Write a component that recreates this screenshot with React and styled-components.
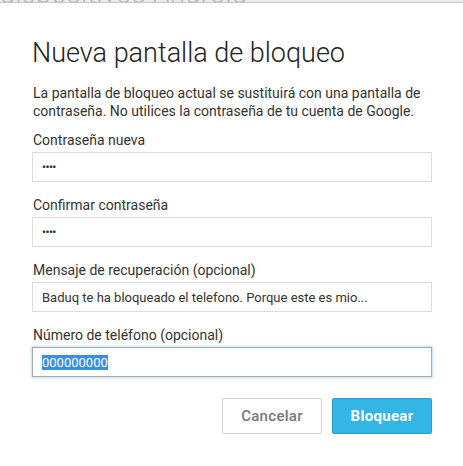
import React from 'react';
import styled, { createGlobalStyle } from 'styled-components';

const GlobalStyle = createGlobalStyle`
    body {
        margin: 0;
        background: #ffffff;
        font-family: Roboto, "Noto Sans", Arial, sans-serif;
    }
`

const fields = [
    { label: 'Contraseña nueva', value: '••••', secret: true },
    { label: 'Confirmar contraseña', value: '••••', secret: true },
    { label: 'Mensaje de recuperación (opcional)', value: 'Baduq te ha bloqueado el telefono. Porque este es mio...' },
    { label: 'Número de teléfono (opcional)', value: '000000000', focused: true },
]

export default function App() {
    return (
        <>
            <GlobalStyle />
            <Backdrop>
                <BackdropText>dispositivos Android</BackdropText>
            </Backdrop>
            <Dialog>
                <Title>Nueva pantalla de bloqueo</Title>
                <Description>
                    La pantalla de bloqueo actual se sustituirá con una pantalla de contraseña. No utilices la contraseña de tu cuenta de Google.
                </Description>
                <Form>
                    {fields.map(f => (
                        <Field key={f.label}>
                            <Label>{f.label}</Label>
                            <InputBox $focused={f.focused}>
                                {f.secret && <Dots>{f.value}</Dots>}
                                {!f.secret && f.focused && <Selected>{f.value}</Selected>}
                                {!f.secret && !f.focused && f.value}
                            </InputBox>
                        </Field>
                    ))}
                </Form>
                <Actions>
                    <Button>Cancelar</Button>
                    <Button $primary>Bloquear</Button>
                </Actions>
            </Dialog>
        </>
    )
}

const Backdrop = styled.div`
    height: 2px;
    overflow: hidden;
    display: flex;
    align-items: flex-end;
    background: #ececec;
    border-bottom: 1px solid #c9c9c9;
`

const BackdropText = styled.span`
    font-size: 27px;
    line-height: 27px;
    margin-bottom: -6px;
    color: #b9b9b9;
    font-weight: 300;
    letter-spacing: 0.4px;
    white-space: nowrap;
`

const Dialog = styled.div`
    width: 400px;
    padding: 35px 0 0 32px;
    display: flex;
    flex-direction: column;
`

const Title = styled.h1`
    margin: 0;
    font-size: 27px;
    line-height: 31px;
    font-weight: 300;
    color: #222;
`

const Description = styled.p`
    margin: 15px 0 0 1px;
    font-size: 14px;
    line-height: 18px;
    color: #333;
`

const Form = styled.div`
    margin-top: 11px;
    display: flex;
    flex-direction: column;
    gap: 14px;
`

const Field = styled.div`
    display: flex;
    flex-direction: column;
`

const Label = styled.label`
    font-size: 14px;
    line-height: 18px;
    color: #333;
    margin: 0 0 3px 1px;
`

const InputBox = styled.div`
    box-sizing: border-box;
    height: 30px;
    display: flex;
    align-items: center;
    padding: 0 9px;
    font-size: 13px;
    color: #333;
    border: 1px solid ${p => p.$focused ? '#a9a9a9' : '#dcdcdc'};
    box-shadow: ${p => p.$focused ? '0 0 2px 1px #bfe0f4' : 'none'};
`

const Dots = styled.span`
    font-size: 11px;
    font-weight: 700;
    letter-spacing: -0.5px;
    color: #333;
`

const Selected = styled.span`
    background: #3a8ee6;
    color: #fff;
    line-height: 15px;
`

const Actions = styled.div`
    display: flex;
    justify-content: flex-end;
    gap: 10px;
    margin-top: 21px;
`

const Button = styled.button`
    box-sizing: border-box;
    width: 100px;
    height: 36px;
    border-radius: 2px;
    font-family: Roboto, Arial, sans-serif;
    font-size: 15px;
    font-weight: ${p => p.$primary ? 700 : 500};
    letter-spacing: 0.3px;
    color: ${p => p.$primary ? '#fff' : '#777'};
    background: ${p => p.$primary ? '#33b5e5' : '#fff'};
    border: 1px solid ${p => p.$primary ? '#2a9bc9' : '#d4d4d4'};
    cursor: pointer;
`
